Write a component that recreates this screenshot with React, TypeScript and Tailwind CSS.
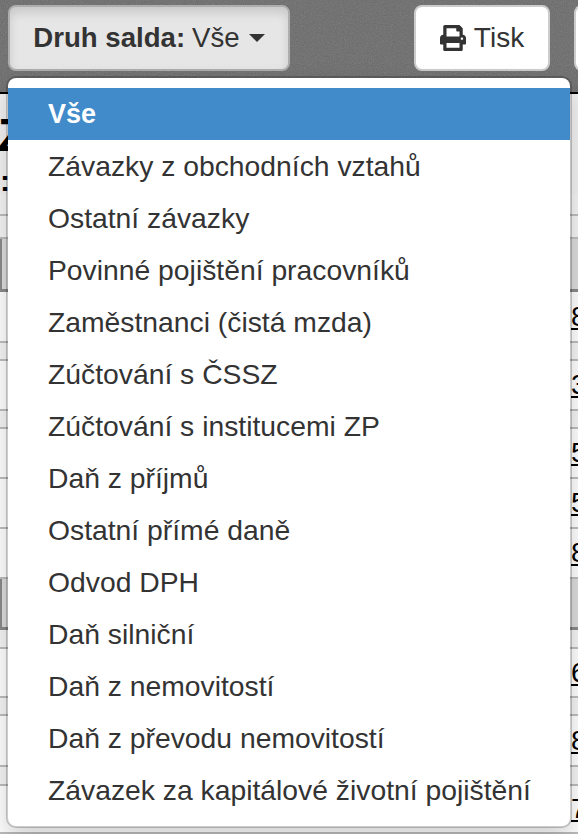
import React from "react";
import { FaPrint } from "react-icons/fa";

const items = [
  "Závazky z obchodních vztahů",
  "Ostatní závazky",
  "Povinné pojištění pracovníků",
  "Zaměstnanci (čistá mzda)",
  "Zúčtování s ČSSZ",
  "Zúčtování s institucemi ZP",
  "Daň z příjmů",
  "Ostatní přímé daně",
  "Odvod DPH",
  "Daň silniční",
  "Daň z nemovitostí",
  "Daň z převodu nemovitostí",
  "Závazek za kapitálové životní pojištění",
];

type Row = { h: string; kind: "head" | "gap" | "num"; n?: string };
const rows: Row[] = [
  { h: "h-[22px]", kind: "gap" },
  { h: "h-[23px]", kind: "gap" },
  { h: "h-[53px]", kind: "head" },
  { h: "h-[51px]", kind: "num", n: "8" },
  { h: "h-[18px]", kind: "gap" },
  { h: "h-[50px]", kind: "num", n: "3" },
  { h: "h-[18px]", kind: "gap" },
  { h: "h-[50px]", kind: "num", n: "5" },
  { h: "h-[50px]", kind: "num", n: "5" },
  { h: "h-[50px]", kind: "num", n: "8" },
  { h: "h-[51px]", kind: "head" },
  { h: "h-[19px]", kind: "gap" },
  { h: "h-[49px]", kind: "num", n: "6" },
  { h: "h-[18px]", kind: "gap" },
  { h: "h-[51px]", kind: "num", n: "8" },
  { h: "h-[19px]", kind: "gap" },
  { h: "h-[48px]", kind: "num", n: "7" },
];

function TableRow({ row }: { row: Row }) {
  const bg =
    row.kind === "head"
      ? "bg-[#dcdcdc] border-b-[3px] border-b-[#8a8a8a] border-l-2 border-l-[#8a8a8a]"
      : row.kind === "gap"
        ? "bg-[#f5f5f5] border-b-2 border-b-[#bdbdbd]"
        : "bg-white border-b-2 border-b-[#bdbdbd]";
  return (
    <div className={`${row.h} ${bg} flex w-full shrink-0`}>
      <div className="flex-1" />
      <div className="w-[7px] shrink-0 flex items-center">
        {row.n && <span className="text-[28px] leading-none underline text-black">{row.n}</span>}
      </div>
    </div>
  );
}

export default function App() {
  return (
    <div className="relative w-[578px] h-[834px] overflow-hidden bg-white font-['Liberation_Sans',Arial,sans-serif] text-[#333]">
      <header className="relative h-[94px] bg-[#696969] border-b-2 border-b-black flex items-start pt-[5px] pl-2 overflow-hidden">
        <svg className="absolute inset-0 w-full h-full opacity-25" aria-hidden="true">
          <filter id="grain">
            <feTurbulence type="fractalNoise" baseFrequency="0.9" numOctaves="2" />
            <feColorMatrix type="saturate" values="0" />
          </filter>
          <rect width="100%" height="100%" filter="url(#grain)" />
        </svg>
        <button className="relative w-[282px] h-[66px] shrink-0 rounded-lg border-2 border-[#adadad] bg-[#e6e6e6] shadow-[inset_0_6px_10px_rgba(0,0,0,0.125)] flex items-center justify-center text-[27.6px] text-[#333]">
          <b>Druh salda:</b>
          <span className="ml-[7px]">Vše</span>
          <span className="ml-[9px] w-0 h-0 border-x-[8px] border-t-[8px] border-x-transparent border-t-[#333]" />
        </button>
        <button className="relative ml-[124px] w-[136px] h-[66px] shrink-0 rounded-lg border-2 border-[#ccc] bg-white flex items-center justify-center text-[28px] text-[#333]">
          <FaPrint className="w-[26px] h-[26px] mr-[8px]" />
          Tisk
        </button>
        <div className="relative ml-6 w-[20px] h-[66px] shrink-0 rounded-l-lg border-2 border-r-0 border-[#ccc] bg-white" />
      </header>

      <main className="relative bg-[#f2f2f2]">
        <div className="h-[100px] pt-[18px] -ml-[2px] text-[46px] leading-none font-bold text-black">
          <div>Z</div>
          <div className="ml-[2px] mt-[8px] text-[30px] leading-none">:</div>
        </div>
        <div className="flex flex-col">
          {rows.map((r, i) => (
            <TableRow key={i} row={r} />
          ))}
        </div>
      </main>

      <ul className="absolute left-[6px] top-[76px] w-[566px] py-[10px] rounded-[10px] border-2 border-[rgba(0,0,0,0.2)] bg-white bg-clip-padding shadow-[0_12px_24px_rgba(0,0,0,0.175)] text-[28.3px] leading-[40px]">
        <li className="px-[40px] py-[6px] bg-[#428bca] text-white font-bold text-[27px]">Vše</li>
        {items.map((t) => (
          <li key={t} className="px-[40px] py-[6px] text-[#333] whitespace-nowrap">
            {t}
          </li>
        ))}
      </ul>
    </div>
  );
}
